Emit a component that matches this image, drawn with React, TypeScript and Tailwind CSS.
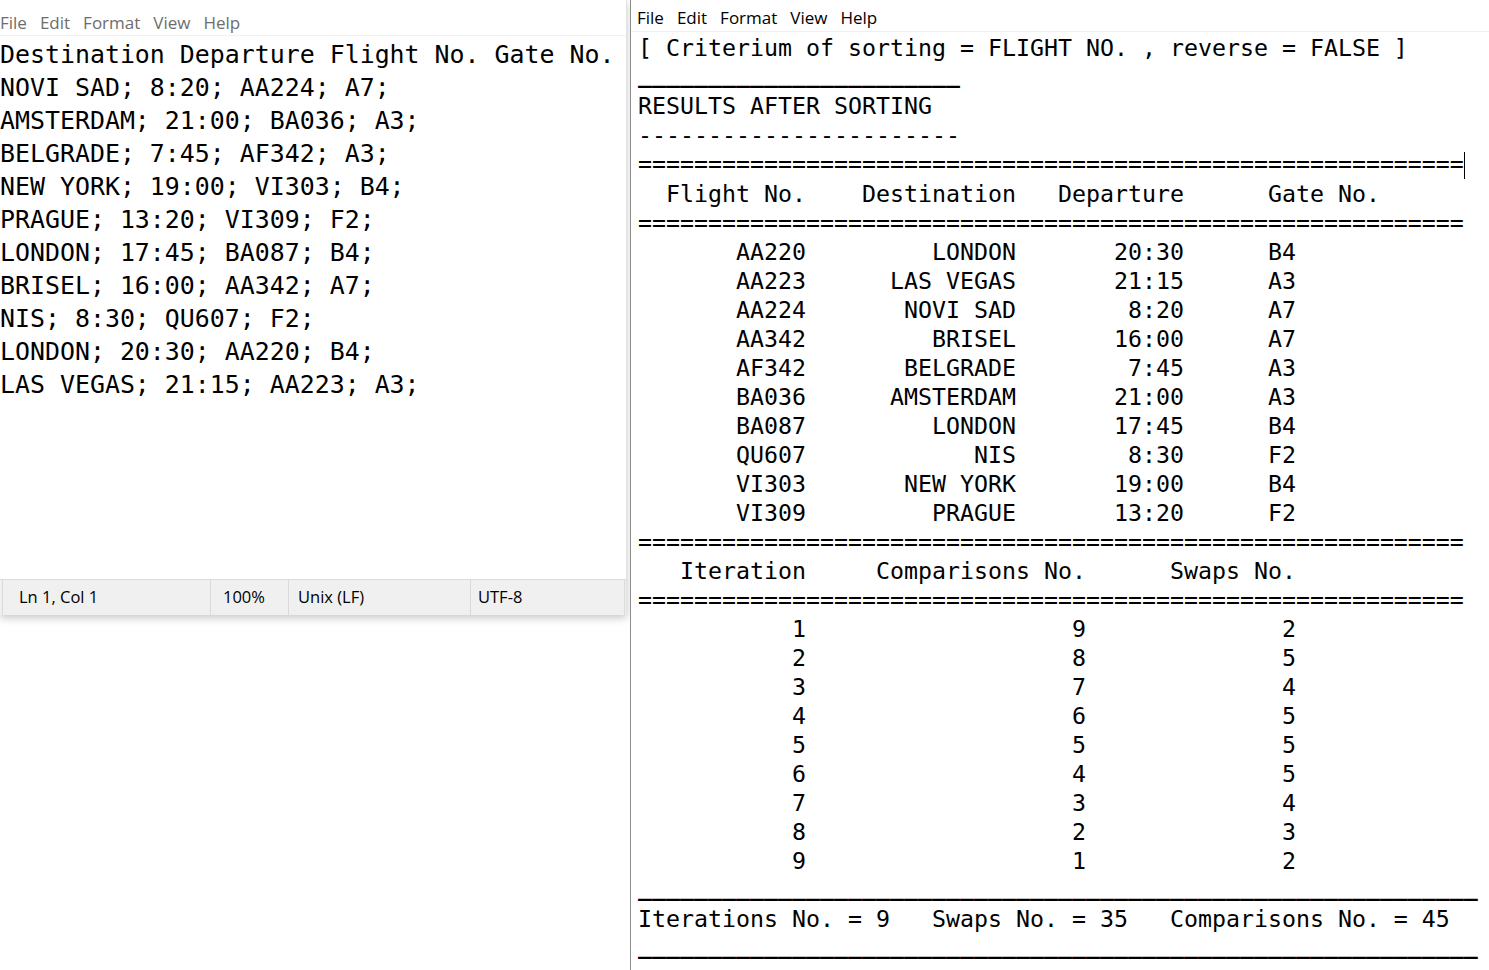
import React from 'react';

const mono = { fontFamily: '"DejaVu Sans Mono", "Liberation Mono", monospace' };

interface Flight {
  dest: string;
  dep: string;
  no: string;
  gate: string;
}

const flights: Flight[] = [
  { dest: 'NOVI SAD', dep: '8:20', no: 'AA224', gate: 'A7' },
  { dest: 'AMSTERDAM', dep: '21:00', no: 'BA036', gate: 'A3' },
  { dest: 'BELGRADE', dep: '7:45', no: 'AF342', gate: 'A3' },
  { dest: 'NEW YORK', dep: '19:00', no: 'VI303', gate: 'B4' },
  { dest: 'PRAGUE', dep: '13:20', no: 'VI309', gate: 'F2' },
  { dest: 'LONDON', dep: '17:45', no: 'BA087', gate: 'B4' },
  { dest: 'BRISEL', dep: '16:00', no: 'AA342', gate: 'A7' },
  { dest: 'NIS', dep: '8:30', no: 'QU607', gate: 'F2' },
  { dest: 'LONDON', dep: '20:30', no: 'AA220', gate: 'B4' },
  { dest: 'LAS VEGAS', dep: '21:15', no: 'AA223', gate: 'A3' },
];

const iterations = [
  [1, 9, 2],
  [2, 8, 5],
  [3, 7, 4],
  [4, 6, 5],
  [5, 5, 5],
  [6, 4, 5],
  [7, 3, 4],
  [8, 2, 3],
  [9, 1, 2],
];

function MenuBar({ inactive }: { inactive?: boolean }) {
  return (
    <div
      className={`flex gap-[13px] text-[17px] leading-none ${inactive ? 'text-[#6d6d6d]' : 'text-black'}`}
      style={{ fontFamily: '"Open Sans", "Noto Sans", sans-serif' }}
    >
      <span>File</span>
      <span>Edit</span>
      <span>Format</span>
      <span>View</span>
      <span>Help</span>
    </div>
  );
}

// thicker underscore rule, like the original editor font draws it
function Rule({ n }: { n: number }) {
  return <span className="font-bold relative top-[-2px]">{'_'.repeat(n)}</span>;
}

function LeftWindow() {
  const lines = [
    'Destination Departure Flight No. Gate No.',
    ...flights.map((f) => `${f.dest}; ${f.dep}; ${f.no}; ${f.gate};`),
  ];

  return (
    <div className="w-[627px] h-[615px] flex flex-col bg-white border-r border-[#e2e2e2] shadow-[0_3px_8px_rgba(0,0,0,0.22)]">
      <div className="h-[36px] flex items-center pt-[10px] border-b border-[#f0f0f0]">
        <MenuBar inactive />
      </div>
      <pre className="flex-1 pt-[2px] text-[24.9px] leading-[33px] text-black" style={mono}>
        {lines.join('\n')}
      </pre>
      <div
        className="h-[36px] flex items-center bg-[#f0f0f0] border-t border-[#dcdcdc] text-[16.5px] text-black"
        style={{ fontFamily: '"Open Sans", "Noto Sans", sans-serif' }}
      >
        <div className="w-[3px] h-full border-r border-[#dadada]" />
        <div className="w-[208px] h-full flex items-center pl-[16px] border-r border-[#dadada]">Ln 1, Col 1</div>
        <div className="w-[78px] h-full flex items-center pl-[12px] border-r border-[#dadada]">100%</div>
        <div className="w-[182px] h-full flex items-center pl-[9px] border-r border-[#dadada]">Unix (LF)</div>
        <div className="w-[154px] h-full flex items-center pl-[7px] border-r border-[#dadada]">UTF-8</div>
      </div>
    </div>
  );
}

function RightWindow() {
  const eq = '='.repeat(59);
  const header = '  Flight No.    Destination   Departure      Gate No.';
  const rows = [...flights]
    .sort((a, b) => a.no.localeCompare(b.no))
    .map((f) => ' '.repeat(7) + f.no + f.dest.padStart(15) + f.dep.padStart(12) + ' '.repeat(6) + f.gate);
  const iterHeader = '   Iteration     Comparisons No.      Swaps No.';
  const iterRows = iterations.map(
    ([i, c, s]) => ' '.repeat(11) + i + ' '.repeat(19) + c + ' '.repeat(14) + s
  );

  const table = [header, eq, ...rows, eq, iterHeader, eq, ...iterRows].join('\n');

  return (
    <div className="flex-1 h-[970px] flex flex-col bg-white border-l border-[#8c8c8c] overflow-hidden">
      <div className="h-[32px] flex items-center pl-[6px] pt-[4px] border-b border-[#f0f0f0]">
        <MenuBar />
      </div>
      <pre className="pl-[7px] pt-[1px] text-[23.25px] leading-[29px] text-black whitespace-pre" style={mono}>
        {'[ Criterium of sorting = FLIGHT NO. , reverse = FALSE ]\n'}
        <Rule n={23} />
        {'\nRESULTS AFTER SORTING\n'}
        {'-'.repeat(23) + '\n'}
        {eq}
        <span className="inline-block w-px h-[27px] bg-black align-middle" />
        {'\n'}
        {table}
        {'\n'}
        <Rule n={60} />
        {'\nIterations No. = 9   Swaps No. = 35   Comparisons No. = 45\n'}
        <Rule n={60} />
      </pre>
    </div>
  );
}

export default function App() {
  return (
    <div className="w-[1489px] h-[970px] flex bg-white overflow-hidden">
      <div className="w-[630px] h-full bg-white">
        <LeftWindow />
      </div>
      <RightWindow />
    </div>
  );
}
